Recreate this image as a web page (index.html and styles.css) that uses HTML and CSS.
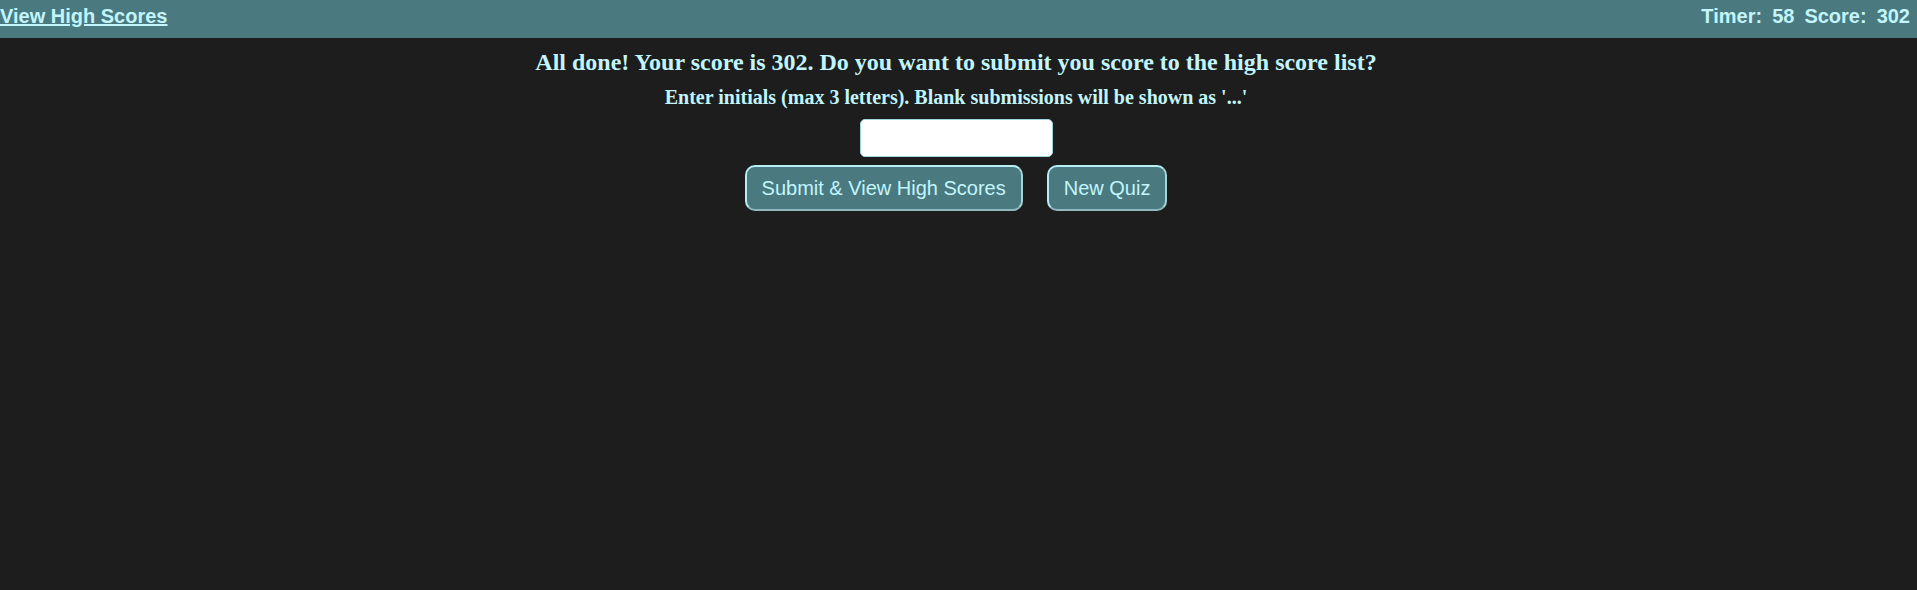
FILE: index.html
```html
<!DOCTYPE html>
<html>
<head>
<meta charset="utf-8">
<link rel="stylesheet" href="styles.css">
</head>
<body>
<header class="topbar">
  <a class="hs-link" href="#">View High Scores</a>
  <div class="stats">
    <span class="stat">Timer:</span><span class="stat">58</span>
    <span class="stat">Score:</span><span class="stat">302</span>
  </div>
</header>
<main class="done">
  <h2 class="title">All done! Your score is 302. Do you want to submit you score to the high score list?</h2>
  <h3 class="subtitle">Enter initials (max 3 letters). Blank submissions will be shown as '...'</h3>
  <input class="initials" type="text" maxlength="3">
  <div class="actions">
    <button class="btn">Submit &amp; View High Scores</button>
    <button class="btn">New Quiz</button>
  </div>
</main>
</body>
</html>
```
FILE: styles.css
```css
html, body {
  margin: 0;
  padding: 0;
  background: #1c1d1c;
  height: 100%;
}
body {
  color: #c2f5fc;
  font-family: "Liberation Serif", serif;
}
.topbar {
  height: 38px;
  box-sizing: border-box;
  background: #4a7a80;
  display: flex;
  justify-content: space-between;
  align-items: flex-start;
  padding: 5px 7px 0 0;
  font-family: "Liberation Sans", Arial, sans-serif;
  font-weight: bold;
  font-size: 20px;
  line-height: 23px;
}
.hs-link {
  color: #c2f5fc;
  text-decoration: underline;
}
.stats {
  display: flex;
  gap: 10px;
}
.done {
  display: flex;
  flex-direction: column;
  align-items: center;
  padding-right: 5px;
}
.title {
  font-size: 24px;
  font-weight: bold;
  line-height: 28px;
  margin: 10px 0 0 0;
}
.subtitle {
  font-size: 20px;
  font-weight: bold;
  line-height: 23px;
  margin: 10px 0 0 0;
}
.initials {
  margin-top: 10px;
  width: 193px;
  height: 38px;
  box-sizing: border-box;
  border: 1.5px solid #9fd6dc;
  border-radius: 5px;
  background: #fff;
  outline: none;
}
.actions {
  display: flex;
  gap: 24px;
  margin-top: 8px;
}
.btn {
  font-family: "Liberation Sans", Arial, sans-serif;
  font-size: 20px;
  line-height: 23px;
  color: #c2f5fc;
  background: #4a7a80;
  border: 2px solid #b5eef5;
  border-bottom-color: #8fb9be;
  border-right-color: #a5d5da;
  border-radius: 10px;
  padding: 10px 15px 9px;
  cursor: pointer;
}
```
